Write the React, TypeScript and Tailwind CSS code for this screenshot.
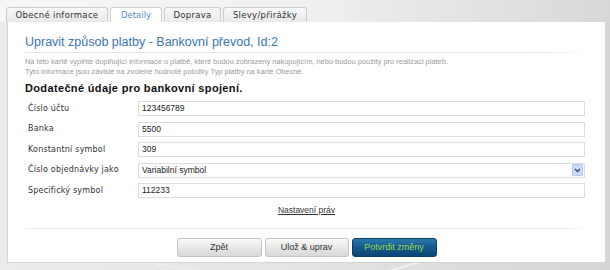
import React from 'react';

const tabs = [
  { label: 'Obecné informace', w: 'w-[102px]', active: false },
  { label: 'Detaily', w: 'w-[52px]', active: true },
  { label: 'Doprava', w: 'w-[57px]', active: false },
  { label: 'Slevy/přirážky', w: 'w-[84px]', active: false },
];

const rows = [
  { label: 'Číslo účtu', value: '123456789' },
  { label: 'Banka', value: '5500' },
  { label: 'Konstantní symbol', value: '309' },
  { label: 'Číslo objednávky jako', value: 'Variabilní symbol', select: true },
  { label: 'Specifický symbol', value: '112233' },
];

function Field({ value, select }: { value: string; select?: boolean }) {
  return (
    <div className="flex h-[15px] w-[447px] items-center justify-between border border-[#dcdcdc] bg-white pl-[3px] pr-px">
      <span className="font-['Liberation_Sans',sans-serif] text-[8.5px] text-[#222]">{value}</span>
      {select && (
        <span className="flex h-[12px] w-[11px] items-center justify-center rounded-[1px] border border-[#b7c8e6] bg-[#cbdaf4]">
          <svg width="7" height="5" viewBox="0 0 7 5">
            <path d="M1 1 L3.5 3.5 L6 1" fill="none" stroke="#2d4f8e" strokeWidth="1.4" />
          </svg>
        </span>
      )}
    </div>
  );
}

export default function App() {
  return (
    <div className="flex h-[270px] w-[610px] flex-col overflow-hidden bg-[linear-gradient(90deg,#ececec_0%,#e6e6e6_40%,#d6d6d6_100%)] font-['DejaVu_Sans',sans-serif]">
      {/* Tabs */}
      <div className="flex h-[22px] items-end gap-[2px] bg-[linear-gradient(90deg,#f6f6f6_0%,#f0f0f0_50%,#d8d8d8_100%)] pl-[6px]">
        {tabs.map((t) =>
          t.active ? (
            <div
              key={t.label}
              className={`${t.w} -mb-px flex h-[16px] items-center justify-center rounded-t-[3px] border border-b-0 border-[#cfcfcf] bg-white text-[8.5px] text-[#5b8cc0]`}
            >
              {t.label}
            </div>
          ) : (
            <div
              key={t.label}
              className={`${t.w} flex h-[15px] items-center justify-center rounded-t-[3px] border border-b-0 border-[#cccccc] bg-[linear-gradient(#f8f8f8,#e9e9e9)] text-[8.5px] tracking-[0.3px] text-[#333]`}
            >
              {t.label}
            </div>
          )
        )}
      </div>

      {/* Panel */}
      <div className="ml-[7px] flex h-[241px] w-[599px] flex-col border border-t-0 border-[#d4d4d4] bg-white px-[17px]">
        <h1 className="mt-[13px] h-[14px] font-['Liberation_Sans',sans-serif] text-[12.5px] leading-[14px] text-[#3b77b0]">
          Upravit způsob platby - Bankovní převod, Id:2
        </h1>
        <div className="mt-[3px] h-px w-[563px] bg-[linear-gradient(90deg,#e4e4e4,#e4e4e4_90%,#ffffff)]" />
        <p className="mt-[4px] font-['Liberation_Sans',sans-serif] text-[7.45px] leading-[10px] text-[#9a9a9a]">
          Na této kartě vyplňte doplňující informace o platbě, které budou zobrazeny nakupujícím, nebo budou použity pro realizaci plateb.
          <br />
          Tyto informace jsou závislé na zvolené hodnotě položky Typ platby na kartě Obecné.
        </p>
        <h2 className="mt-[4px] h-[14px] font-['Liberation_Sans',sans-serif] text-[11px] font-bold leading-[14px] tracking-[0.35px] text-[#111]">
          Dodatečné údaje pro bankovní spojení.
        </h2>

        <div className="mt-[6px] flex flex-col gap-[5.5px] pl-[3px]">
          {rows.map((r) => (
            <div key={r.label} className="flex items-center">
              <span className="w-[110px] text-[8px] tracking-[0.2px] text-[#333]">{r.label}</span>
              <Field value={r.value} select={r.select} />
            </div>
          ))}
        </div>

        <div className="mt-[6px] flex justify-center">
          <a className="font-['Liberation_Sans',sans-serif] text-[8.5px] text-[#333] underline">Nastavení práv</a>
        </div>

        <div className="mt-[11px] h-px w-[563px] bg-[linear-gradient(90deg,#ececec,#e4e4e4_95%,#ffffff)]" />

        <div className="mt-[9px] flex justify-center gap-[3px]">
          <button className="h-[19px] w-[85px] rounded-[3px] border border-[#c4c4c4] bg-[linear-gradient(#fafafa,#e4e4e4_60%,#d8d8d8)] font-['Liberation_Sans',sans-serif] text-[9px] text-[#333]">
            Zpět
          </button>
          <button className="h-[19px] w-[84px] rounded-[3px] border border-[#c4c4c4] bg-[linear-gradient(#fafafa,#e4e4e4_60%,#d8d8d8)] font-['Liberation_Sans',sans-serif] text-[9px] text-[#333]">
            Ulož &amp; uprav
          </button>
          <button className="h-[19px] w-[85px] rounded-[3px] border border-[#0d3f66] bg-[linear-gradient(#2a78ad,#145a8c_50%,#0b4677)] font-['Liberation_Sans',sans-serif] text-[9px] text-[#9ed84a]">
            Potvrdit změny
          </button>
        </div>
      </div>

      {/* Bottom decoration */}
      <div className="h-[7px]">
        <svg width="610" height="7" viewBox="0 0 610 7">
          <path d="M150 0 L200 7 L195 7 L145 0 Z" fill="#f2f2f2" />
          <path d="M420 0 L395 7 L389 7 L414 0 Z" fill="#f2f2f2" />
        </svg>
      </div>
    </div>
  );
}
